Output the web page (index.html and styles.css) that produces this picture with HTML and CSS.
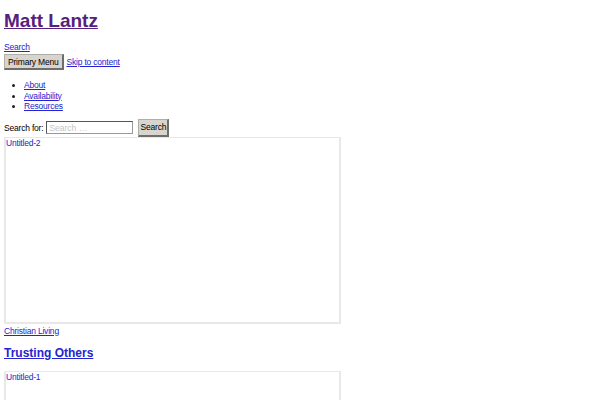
FILE: index.html
```html
<!DOCTYPE html>
<html lang="en">
<head>
    <meta charset="UTF-8">
    <title>Matt Lantz</title>
    <link rel="stylesheet" href="styles.css">
</head>
<body>
    <header class="site-header">
        <h1 class="site-title"><a href="#" class="visited">Matt Lantz</a></h1>
        <a href="#" class="search-toggle">Search</a>
        <div class="menu-row">
            <button class="menu-btn">Primary Menu</button>
            <a href="#">Skip to content</a>
        </div>
        <ul class="nav">
            <li><a href="#">About</a></li>
            <li><a href="#">Availability</a></li>
            <li><a href="#">Resources</a></li>
        </ul>
        <form class="search-form">
            <label>Search for: <input type="search" placeholder="Search …"></label>
            <button type="button" class="search-btn">Search</button>
        </form>
    </header>

    <article class="post">
        <a href="#" class="thumb"><span>Untitled-2</span></a>
        <a href="#" class="cat">Christian Living</a>
        <h2 class="post-title"><a href="#">Trusting Others</a></h2>
        <a href="#" class="thumb"><span>Untitled-1</span></a>
    </article>
</body>
</html>
```
FILE: styles.css
```css
body {
    margin: 0;
    padding: 0 4px;
    font-family: "Liberation Sans", Arial, sans-serif;
    font-size: 8.5px;
    letter-spacing: -0.2px;
    color: #222;
    background: #fff;
}

a {
    color: #2424d0;
}

a.visited {
    color: #56207e;
}

.site-title {
    font-size: 19px;
    line-height: 22px;
    letter-spacing: 0;
    font-weight: bold;
    margin: 10px 0 10px;
}

.search-toggle {
    display: block;
    line-height: 10px;
}

.menu-row {
    display: flex;
    align-items: center;
    gap: 3px;
    margin-top: 2px;
}

.menu-btn,
.search-btn {
    font-family: inherit;
    font-size: 8.5px;
    letter-spacing: -0.2px;
    color: #000;
    background: #d8d5cf;
    border: 1px solid #b0aea8;
    border-right: 2px solid #6f6e6a;
    border-bottom: 2px solid #6f6e6a;
    padding: 0 3px;
    height: 16px;
}

.nav {
    margin: 10px 0 7px;
    padding-left: 20px;
    line-height: 10.5px;
}

.search-form {
    display: flex;
    align-items: center;
    gap: 5px;
    color: #000;
}

.search-form label {
    display: flex;
    align-items: center;
    gap: 3px;
}

.search-form input {
    box-sizing: border-box;
    width: 87px;
    height: 13px;
    font-family: inherit;
    font-size: 8.5px;
    padding: 0 2px;
    margin: 0;
    border: 1px solid #999;
    border-top-color: #555;
    border-left-color: #555;
}

.search-form input::placeholder {
    color: #c4c4c4;
}

.search-btn {
    width: 31px;
    height: 18px;
    padding: 0;
}

.thumb {
    display: block;
    width: 333px;
    height: 184px;
    border: 2px solid #e8e8e8;
    border-top-width: 1px;
    text-decoration: none;
    line-height: 10px;
}

.cat {
    display: block;
    margin-top: 2px;
    line-height: 10px;
}

.post-title {
    font-size: 12px;
    line-height: 14px;
    letter-spacing: 0;
    margin: 10px 0 11px;
}
```
